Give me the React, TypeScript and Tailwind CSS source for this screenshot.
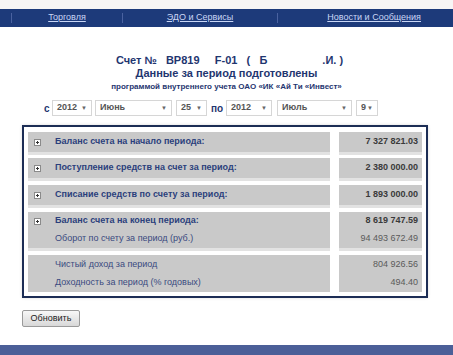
export default function App() {
  const Sel = ({ value, w, ml }: { value: string; w: string; ml: string }) => (
    <div className={`${w} ${ml} h-[16px] bg-white border border-[#d6d6d6] flex items-center justify-between pl-[4px] pr-[4px] text-[9px] text-[#555]`}>
      <span>{value}</span>
      <span className="text-[6px] text-[#666]">▼</span>
    </div>
  )

  const Plus = () => (
    <div className="w-[7px] h-[7px] border border-[#8a8a8a] bg-white flex items-center justify-center">
      <span className="block w-[3px] h-[1px] bg-[#333] relative">
        <span className="absolute left-[1px] top-[-1px] w-[1px] h-[3px] bg-[#333]" />
      </span>
    </div>
  )

  const Gap = ({ h }: { h: string }) => (
    <div className={`flex ${h}`}>
      <div className="w-[302px] h-[3px] bg-[#e2e2e2]" />
      <div className="w-[9px]" />
      <div className="w-[83px] h-[3px] bg-[#e2e2e2]" />
    </div>
  )

  return (
    <div className="w-[453px] h-[355px] bg-white overflow-hidden flex flex-col font-['Liberation_Sans',Arial,sans-serif]">
      {/* top strip */}
      <div className="h-[9px] bg-[#f7f5f5]" />

      {/* nav */}
      <div className="h-[18px] bg-[#1d3a7a] flex items-center text-[9px] text-[#c9d6f5]">
        <div className="w-[12px] h-[10px] border-r border-[#4a62a0]" />
        <div className="w-[111px] h-[10px] border-r border-[#4a62a0] flex items-center justify-center">
          <span className="underline">Торговля</span>
        </div>
        <div className="w-[155px] h-[10px] border-r border-[#4a62a0] flex items-center justify-center">
          <span className="underline">ЭДО и Сервисы</span>
        </div>
        <div className="flex-1 flex items-center justify-end pr-[32px]">
          <span className="underline">Новости и Сообщения</span>
        </div>
      </div>

      {/* heading */}
      <div className="mt-[27px] flex flex-col items-center text-[#1f3670] font-bold">
        <div className="h-[13px] leading-[13px] text-[11px] whitespace-pre ml-[6px]">
          Счет №   BP819     F-01   (   Б                  .И. )
        </div>
        <div className="h-[13px] leading-[13px] text-[11px] mt-[0px]">Данные за период подготовлены</div>
        <div className="h-[13px] leading-[13px] text-[8px] mt-[0px]">программой внутреннего учета ОАО «ИК «Ай Ти «Инвест»</div>
      </div>

      {/* period selects */}
      <div className="mt-[7px] flex items-center pl-[44px] text-[#1f3670] font-bold text-[10px]">
        <span className="w-[8px]">с</span>
        <Sel value="2012" w="w-[40px]" ml="ml-0" />
        <Sel value="Июнь" w="w-[77px]" ml="ml-[3px]" />
        <Sel value="25" w="w-[31px]" ml="ml-[4px]" />
        <span className="ml-[4px] w-[15px]">по</span>
        <Sel value="2012" w="w-[46px]" ml="ml-0" />
        <Sel value="Июль" w="w-[75px]" ml="ml-[5px]" />
        <Sel value="9" w="w-[22px]" ml="ml-[4px]" />
      </div>

      {/* summary box */}
      <div className="mt-[9px] ml-[22px] w-[406px] border-2 border-[#1c2d55] shadow-[0_0_3px_rgba(0,0,0,0.15)] pt-[5px] pb-[4px] pl-[4px] text-[9px]">
        {/* row 1 */}
        <div className="flex h-[20px]">
          <div className="w-[302px] bg-[#c9c9c9] flex items-center pl-[6px]">
            <Plus />
            <span className="ml-[14px] font-bold text-[#2b3f7c]">Баланс счета на начало периода:</span>
          </div>
          <div className="w-[9px]" />
          <div className="w-[83px] bg-[#c9c9c9] flex items-center justify-end pr-[4px] font-bold text-[#3a3a3a]">7 327 821.03</div>
        </div>
        <Gap h="h-[6px]" />
        {/* row 2 */}
        <div className="flex h-[20px]">
          <div className="w-[302px] bg-[#c9c9c9] flex items-center pl-[6px]">
            <Plus />
            <span className="ml-[14px] font-bold text-[#2b3f7c]">Поступление средств на счет за период:</span>
          </div>
          <div className="w-[9px]" />
          <div className="w-[83px] bg-[#c9c9c9] flex items-center justify-end pr-[4px] font-bold text-[#3a3a3a]">2 380 000.00</div>
        </div>
        <Gap h="h-[7px]" />
        {/* row 3 */}
        <div className="flex h-[20px]">
          <div className="w-[302px] bg-[#c9c9c9] flex items-center pl-[6px]">
            <Plus />
            <span className="ml-[14px] font-bold text-[#2b3f7c]">Списание средств по счету за период:</span>
          </div>
          <div className="w-[9px]" />
          <div className="w-[83px] bg-[#c9c9c9] flex items-center justify-end pr-[4px] font-bold text-[#3a3a3a]">1 893 000.00</div>
        </div>
        <Gap h="h-[7px]" />
        {/* row 4 */}
        <div className="flex">
          <div className="w-[302px] bg-[#c9c9c9] flex flex-col pl-[6px]">
            <div className="h-[18px] flex items-center">
              <Plus />
              <span className="ml-[14px] font-bold text-[#2b3f7c]">Баланс счета на конец периода:</span>
            </div>
            <div className="h-[18px] flex items-center pl-[21px] text-[#3a4a80]">Оборот по счету за период (руб.)</div>
          </div>
          <div className="w-[9px]" />
          <div className="w-[83px] bg-[#c9c9c9] flex flex-col items-end pr-[4px]">
            <div className="h-[18px] flex items-center font-bold text-[#3a3a3a]">8 619 747.59</div>
            <div className="h-[18px] flex items-center text-[#5a5a5a]">94 493 672.49</div>
          </div>
        </div>
        <Gap h="h-[7px]" />
        {/* row 5 */}
        <div className="flex">
          <div className="w-[302px] bg-[#c9c9c9] flex flex-col pl-[27px] text-[#3a4a80]">
            <div className="h-[19px] flex items-center">Чистый доход за период</div>
            <div className="h-[18px] flex items-center">Доходность за период (% годовых)</div>
          </div>
          <div className="w-[9px]" />
          <div className="w-[83px] bg-[#c9c9c9] flex flex-col items-end pr-[4px] text-[#5a5a5a]">
            <div className="h-[19px] flex items-center">804 926.56</div>
            <div className="h-[18px] flex items-center">494.40</div>
          </div>
        </div>
      </div>

      {/* button */}
      <div className="mt-[12px] ml-[22px]">
        <div className="w-[58px] h-[17px] border border-[#9a9a9a] rounded-[2px] bg-gradient-to-b from-[#f8f8f8] to-[#d8d8d8] flex items-center justify-center text-[9px] text-[#222]">
          Обновить
        </div>
      </div>

      <div className="flex-1" />
      {/* bottom bar */}
      <div className="h-[10px] bg-[#4b5f98]" />
    </div>
  )
}
